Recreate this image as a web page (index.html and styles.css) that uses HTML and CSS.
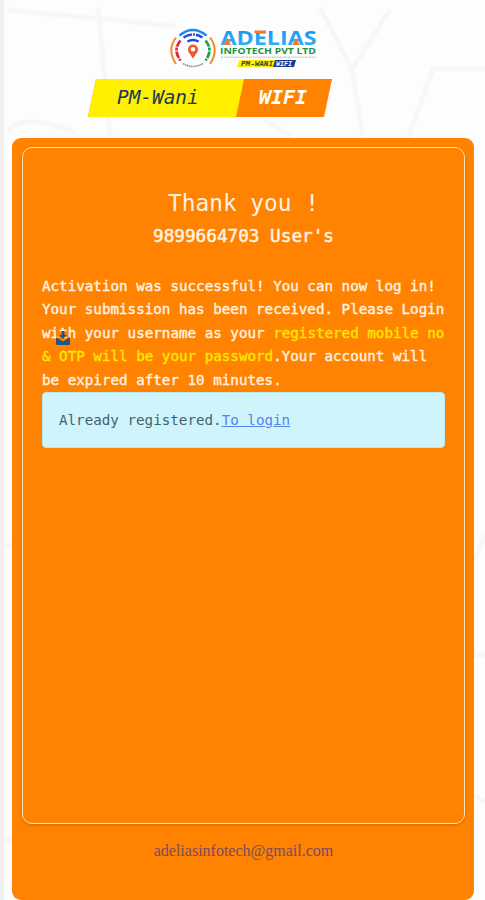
FILE: index.html
```html
<!DOCTYPE html>
<html lang="en">
<head>
<meta charset="utf-8">
<title>PM-Wani WIFI</title>
<link rel="stylesheet" href="styles.css">
</head>
<body>
<svg class="backdrop" viewBox="0 0 485 900" aria-hidden="true">
  <g fill="none" stroke="#f7f7f7" stroke-width="5">
    <path d="M8 10L175 26M98 8L110 135M320 8L352 70L363 138M390 10L350 72M485 69H433L408 138M8 132Q20 112 75 132M265 120L292 138"/>
    <path d="M474 560L485 535M474 795L485 802M5 545H12M5 840H12M474 655H485"/>
  </g>
</svg>
<header class="header">
  <svg class="logo" viewBox="0 0 150 42" role="img" aria-label="Adelias Infotech">
    <defs>
      <linearGradient id="sky" x1="0" y1="0" x2="0" y2="1"><stop offset="0" stop-color="#168bf2"/><stop offset="1" stop-color="#35baf0"/></linearGradient>
    </defs>
    <g fill="none" stroke-width="2">
      <path d="M9.5 7.5Q22.500 -3.500 36.500 7.500" stroke="#168bea" stroke-width="2.500"/>
      <path d="M13.500 9.500Q23 3.500 32.500 9.500" stroke="#2449e0" stroke-width="2.400" stroke-dasharray="9 1 2 1 20"/>
      <path d="M17.500 13.500Q23 10.500 28.500 13.500" stroke="#1744df" stroke-width="2.500"/>
      <path d="M6 9.500Q-3.500 22 6 36" stroke="#f58a2b"/>
      <path d="M40 9.500Q49.500 22 40 36" stroke="#f58a2b"/>
      <path d="M10.500 12.500Q2.500 22 10.500 32.500" stroke="#df2439" stroke-width="2.700" stroke-dasharray="7 1 3 1"/>
      <path d="M35.500 12.500Q43.500 22 35.500 32.500" stroke="#15a447" stroke-width="2.700" stroke-dasharray="7 1 3 1"/>
    </g>
    <path fill="#f2572a" fill-rule="evenodd" d="M23 30.500C20 26 18 24 18 21.500A5 5 0 0 1 28 21.500C28 24 26 26 23 30.500ZM23 19A2.300 2.300 0 1 0 23 23.600A2.300 2.300 0 1 0 23 19Z"/>
    <path d="M13 35.500Q23 41.500 33 35.500" fill="none" stroke="#999" stroke-width="1.700" stroke-dasharray="1.500 .5"/>
    <text class="logo-name" x="50.500" y="16.800" textLength="96" lengthAdjust="spacingAndGlyphs" fill="url(#sky)">ADELIAS</text>
    <path fill="#f47a26" d="M57.500 10L61 17H54ZM126 10L129.500 17H122.500ZM84.500 2.500H96V4.900H84.500Z"/>
    <text class="logo-sub" x="50" y="26" textLength="96" lengthAdjust="spacingAndGlyphs">INFOTECH PVT LTD</text>
    <path d="M51 29.300H146" stroke="#d0d0d0" stroke-width="1.500" stroke-dasharray="2 .7 1 .5"/>
    <path fill="#fff000" d="M69 32H105L103 39H67Z"/>
    <path fill="#173c99" d="M105 32H126L124 39H103Z"/>
    <text class="logo-tag" x="71" y="37.900" textLength="32" lengthAdjust="spacingAndGlyphs" fill="#304337">PM-WANI</text>
    <text class="logo-tag" x="106" y="37.900" textLength="16" lengthAdjust="spacingAndGlyphs" fill="#fff">WIFI</text>
  </svg>
  <div class="ribbon">
    <span class="ribbon-name">PM-Wani</span>
    <span class="ribbon-wifi">WIFI</span>
  </div>
</header>
<main class="card">
  <section class="panel">
    <h1 class="title">Thank you !</h1>
    <h2 class="user">9899664703 User's</h2>
    <p class="message">Activation was successful! You can now log in!<br>Your submission has been received. Please Login<br><span class="with">with<svg class="envelope" viewBox="0 0 14 14" aria-hidden="true"><path fill="#235780" d="M5.500 0H8.500V4H11L7 8L3 4H5.500ZM0 6L7 10.500L14 6V12.500Q14 14 12.500 14H1.500Q0 14 0 12.500Z"/></svg></span> your username as your <span class="highlight">registered mobile no<br>&amp; OTP will be your password</span>.Your account will<br>be expired after 10 minutes.</p>
    <div class="notice">Already registered.<a href="#">To login</a></div>
  </section>
  <footer class="contact">adeliasinfotech@gmail.com</footer>
</main>
</body>
</html>
```
FILE: styles.css
```css
* {
  box-sizing: border-box;
}

body {
  margin: 0;
  height: 900px;
  overflow: hidden;
  display: flex;
  flex-direction: column;
  padding: 28px 11px 0 12px;
  border-left: 0;
  background: linear-gradient(90deg, #f0f0f0 4px, #fdfdfd 4px);
  font-family: "DejaVu Sans Mono", monospace;
}

.backdrop {
  position: absolute;
  inset: 0;
  width: 485px;
  height: 900px;
  z-index: -1;
}

.header {
  height: 110px;
  flex: none;
}

.logo {
  display: block;
  width: 150px;
  height: 42px;
  margin-left: 158px;
}

.logo-name {
  font: bold 20px "Open Sans", sans-serif;
}

.logo-sub {
  font: bold 9.5px "Open Sans", sans-serif;
  fill: #239442;
}

.logo-tag {
  font: italic bold 6.5px "Liberation Mono", monospace;
}

.ribbon {
  display: flex;
  width: 244px;
  height: 38px;
  margin: 9px 0 0 76px;
  background: #ff8200;
  clip-path: polygon(8px 0, 100% 0, 236px 100%, 0 100%);
  font-size: 19.4px;
  font-style: italic;
  line-height: 37px;
}

.ribbon-name {
  width: 156px;
  padding-left: 29px;
  background: #fff000;
  clip-path: polygon(0 0, 100% 0, 148px 100%, 0 100%);
  color: #173a50;
}

.ribbon-wifi {
  padding-left: 15px;
  color: #fff;
  font-size: 20px;
  font-weight: bold;
}

.card {
  height: 762px;
  flex: none;
  padding: 9px 9px 0 10px;
  border-radius: 9px;
  background: #ff8200;
}

.panel {
  height: 677px;
  padding: 39px 19px 0;
  border: 1px solid #ffe1b5;
  border-radius: 10px;
  box-shadow: 0 1px 3px #c66b12;
  color: #fff2e3;
}

.title {
  margin: 0;
  font-size: 22.8px;
  font-weight: normal;
  line-height: 32px;
  text-align: center;
}

.user {
  margin: 0;
  font-size: 17.7px;
  font-weight: normal;
  -webkit-text-stroke: 0.5px currentColor;
  line-height: 35px;
  text-align: center;
}

.message {
  margin: 21px 0 0;
  font-size: 14.22px;
  -webkit-text-stroke: 0.4px currentColor;
  line-height: 23.4px;
  white-space: nowrap;
}

.with {
  position: relative;
}

.envelope {
  position: absolute;
  left: 14px;
  top: 6px;
  width: 14px;
  height: 14px;
}

.highlight {
  color: #ffe500;
}

.notice {
  height: 56px;
  padding-left: 16px;
  border: 1px solid #b6e8ed;
  border-radius: 4px;
  background: #cff4fc;
  color: #42636b;
  font-size: 14.22px;
  line-height: 55px;
}

.notice a {
  color: #5484ef;
}

.contact {
  margin-top: 15px;
  color: #7a4b60;
  font: 16px/24px "Liberation Serif", serif;
  text-align: center;
}
```
